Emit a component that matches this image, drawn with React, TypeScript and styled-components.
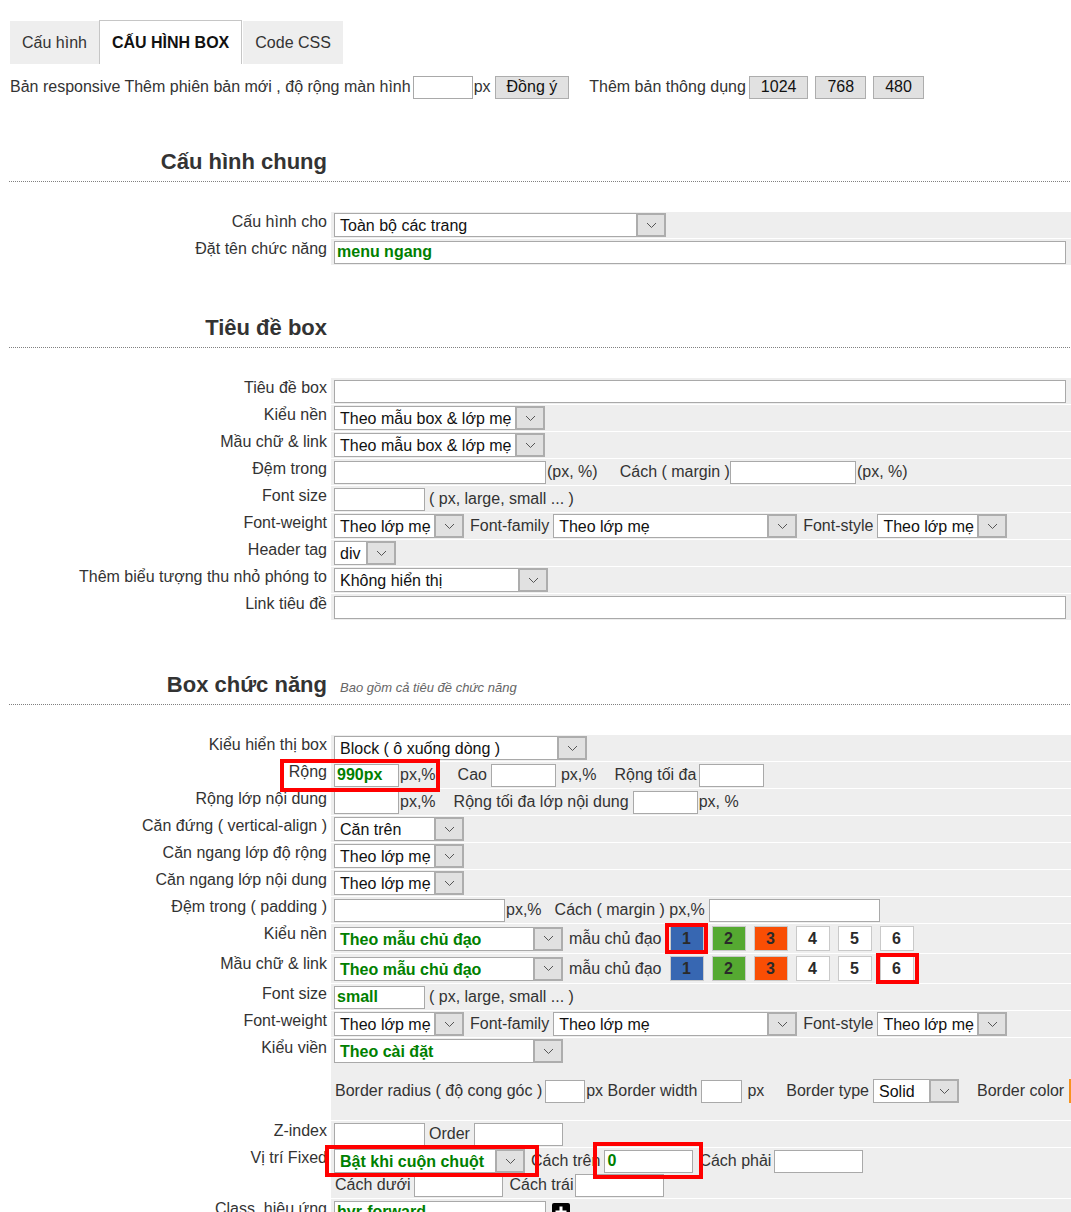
import React from 'react'
import styled, { createGlobalStyle, css } from 'styled-components'

const GREEN = '#008000'

const GlobalStyle = createGlobalStyle`
  html, body {
    margin: 0;
    padding: 0;
    background: #fff;
    overflow: hidden;
  }
  body {
    font-family: 'Liberation Sans', Arial, sans-serif;
    font-size: 16px;
    color: #333;
  }
  * {
    box-sizing: border-box;
  }
`

type SelProps = {
  w: number
  ml?: number
  green?: boolean
  children: React.ReactNode
}

const Sel: React.FC<SelProps> = ({ w, ml, green, children }) => (
  <SelectBox $w={w} $ml={ml}>
    <SelectValue $green={green}>{children}</SelectValue>
    <SelectArrow>
      <svg width="11" height="7" viewBox="0 0 11 7">
        <polyline points="1,1 5.5,5.5 10,1" fill="none" stroke="#555" strokeWidth="1" />
      </svg>
    </SelectArrow>
  </SelectBox>
)

type RowProps = {
  label?: string
  h?: number
  stack?: boolean
  children?: React.ReactNode
}

const Row: React.FC<RowProps> = ({ label, h, stack, children }) => (
  <>
    <Label>{label}</Label>
    <Field $h={h} $stack={stack}>
      {children}
    </Field>
  </>
)

const FontRow = () => (
  <Row label="Font-weight">
    <Sel w={130}>Theo lớp mẹ</Sel>
    <Txt $ml={6}>Font-family</Txt>
    <Sel w={244} ml={4}>
      Theo lớp mẹ
    </Sel>
    <Txt $ml={6}>Font-style</Txt>
    <Sel w={130} ml={4}>
      Theo lớp mẹ
    </Sel>
  </Row>
)

const swatches = [
  { n: 1, bg: '#3767b2' },
  { n: 2, bg: '#55a931' },
  { n: 3, bg: '#f94e04' },
  { n: 4, bg: '#fff' },
  { n: 5, bg: '#fff' },
  { n: 6, bg: '#fff' },
]

const Swatches = () => (
  <>
    {swatches.map((s) => (
      <Swatch key={s.n} $bg={s.bg}>
        {s.n}
      </Swatch>
    ))}
  </>
)

const App: React.FC = () => {
  return (
    <Page>
      <GlobalStyle />
      <Tabs>
        <Tab>Cấu hình</Tab>
        <Tab $active>CẤU HÌNH BOX</Tab>
        <Tab $gap>Code CSS</Tab>
      </Tabs>

      <TopBar>
        <Txt>Bản responsive Thêm phiên bản mới , độ rộng màn hình</Txt>
        <In $w={60} $ml={2} />
        <Txt $ml={1}>px</Txt>
        <Btn $ml={4}>Đồng ý</Btn>
        <Txt $ml={20}>Thêm bản thông dụng</Txt>
        <Btn $ml={3}>1024</Btn>
        <Btn $ml={7}>768</Btn>
        <Btn $ml={7}>480</Btn>
      </TopBar>

      <Section $mt={49}>
        <Head>
          <Title>Cấu hình chung</Title>
        </Head>
        <Form>
          <Row label="Cấu hình cho">
            <Sel w={332}>Toàn bộ các trang</Sel>
          </Row>
          <Row label="Đặt tên chức năng">
            <In $w={732} $green defaultValue="menu ngang" />
          </Row>
        </Form>
      </Section>

      <Section $mt={49}>
        <Head>
          <Title>Tiêu đề box</Title>
        </Head>
        <Form>
          <Row label="Tiêu đề box">
            <In $w={732} />
          </Row>
          <Row label="Kiểu nền">
            <Sel w={211}>Theo mẫu box &amp; lớp mẹ</Sel>
          </Row>
          <Row label="Mầu chữ & link">
            <Sel w={211}>Theo mẫu box &amp; lớp mẹ</Sel>
          </Row>
          <Row label="Đệm trong">
            <In $w={212} />
            <Txt $ml={1}>(px, %)</Txt>
            <Txt $ml={22}>Cách ( margin )</Txt>
            <In $w={126} />
            <Txt $ml={1}>(px, %)</Txt>
          </Row>
          <Row label="Font size">
            <In $w={91} />
            <Txt $ml={4}>( px, large, small ... )</Txt>
          </Row>
          <FontRow />
          <Row label="Header tag">
            <Sel w={62}>div</Sel>
          </Row>
          <Row label="Thêm biểu tượng thu nhỏ phóng to">
            <Sel w={214}>Không hiển thị</Sel>
          </Row>
          <Row label="Link tiêu đề">
            <In $w={732} />
          </Row>
        </Form>
      </Section>

      <Section $mt={51}>
        <Head>
          <Title>Box chức năng</Title>
          <Subtitle>Bao gồm cả tiêu đề chức năng</Subtitle>
        </Head>
        <Form>
          <Row label="Kiểu hiển thị box">
            <Sel w={253}>Block ( ô xuống dòng )</Sel>
          </Row>
          <Row label="Rộng">
            <In $w={65} $green defaultValue="990px" />
            <Txt $ml={1}>px,%</Txt>
            <Txt $ml={22}>Cao</Txt>
            <In $w={65} $ml={4} />
            <Txt $ml={5}>px,%</Txt>
            <Txt $ml={18}>Rộng tối đa</Txt>
            <In $w={65} $ml={3} />
          </Row>
          <Row label="Rộng lớp nội dung">
            <In $w={65} />
            <Txt $ml={1}>px,%</Txt>
            <Txt $ml={18}>Rộng tối đa lớp nội dung</Txt>
            <In $w={65} $ml={4} />
            <Txt $ml={1}>px, %</Txt>
          </Row>
          <Row label="Căn đứng ( vertical-align )">
            <Sel w={130}>Căn trên</Sel>
          </Row>
          <Row label="Căn ngang lớp độ rộng">
            <Sel w={130}>Theo lớp mẹ</Sel>
          </Row>
          <Row label="Căn ngang lớp nội dung">
            <Sel w={130}>Theo lớp mẹ</Sel>
          </Row>
          <Row label="Đệm trong ( padding )">
            <In $w={171} />
            <Txt $ml={1}>px,%</Txt>
            <Txt $ml={13}>Cách ( margin ) px,%</Txt>
            <In $w={171} $ml={4} />
          </Row>
          <Row label="Kiểu nền" h={29}>
            <Sel w={229} green>
              Theo mẫu chủ đạo
            </Sel>
            <Txt $ml={6}>mẫu chủ đạo</Txt>
            <Swatches />
          </Row>
          <Row label="Mầu chữ & link" h={29}>
            <Sel w={229} green>
              Theo mẫu chủ đạo
            </Sel>
            <Txt $ml={6}>mẫu chủ đạo</Txt>
            <Swatches />
          </Row>
          <Row label="Font size">
            <In $w={91} $green defaultValue="small" />
            <Txt $ml={4}>( px, large, small ... )</Txt>
          </Row>
          <FontRow />
          <Row label="Kiểu viền" stack>
            <Sel w={229} green>
              Theo cài đặt
            </Sel>
            <BorderLine>
              <Txt $ml={1}>Border radius ( độ cong góc )</Txt>
              <In $w={40} $ml={3} />
              <Txt $ml={1}>px Border width</Txt>
              <In $w={41} $ml={4} />
              <Txt $ml={5}>px</Txt>
              <Txt $ml={22}>Border type</Txt>
              <Sel w={86} ml={4}>
                Solid
              </Sel>
              <Txt $ml={18}>Border color</Txt>
              <ColorPick />
            </BorderLine>
          </Row>
          <Row label="Z-index">
            <In $w={91} />
            <Txt $ml={4}>Order</Txt>
            <In $w={89} $ml={4} />
          </Row>
          <Row label="Vị trí Fixed" stack>
            <Line>
              <Sel w={191} green>
                Bật khi cuộn chuột
              </Sel>
              <Txt $ml={6}>Cách trên</Txt>
              <In $w={89} $ml={4} $green defaultValue="0" />
              <Txt $ml={6}>Cách phải</Txt>
              <In $w={89} $ml={3} />
            </Line>
            <Line>
              <Txt $ml={1}>Cách dưới</Txt>
              <In $w={89} $ml={4} />
              <Txt $ml={6}>Cách trái</Txt>
              <In $w={89} $ml={2} />
            </Line>
          </Row>
          <Row label="Class, hiệu ứng">
            <In $w={212} $green defaultValue="hvr-forward" />
            <PlusBtn>
              <svg width="18" height="18" viewBox="0 0 18 18">
                <rect x="0" y="0" width="18" height="18" rx="2" fill="#000" />
                <path d="M9 3.5v11M3.5 9h11" stroke="#fff" strokeWidth="3" />
              </svg>
            </PlusBtn>
          </Row>
        </Form>
      </Section>

      <Mark $x={280} $y={759} $w={160} $h={33} />
      <Mark $x={665} $y={923} $w={43} $h={31} />
      <Mark $x={876} $y={953} $w={43} $h={31} />
      <Mark $x={325} $y={1145} $w={214} $h={32} />
      <Mark $x={593} $y={1142} $w={110} $h={37} />
    </Page>
  )
}

const Page = styled.div`
  position: relative;
  width: 1100px;
  padding: 20px 0 40px 9px;
`

const Tabs = styled.div`
  display: flex;
  align-items: flex-end;
  height: 44px;
  margin-left: 1px;
`

const Tab = styled.div<{ $active?: boolean; $gap?: boolean }>`
  display: flex;
  align-items: center;
  height: 43px;
  padding: 0 12px;
  background: #eee;
  color: #333;
  margin-left: ${(p) => (p.$gap ? 1 : 0)}px;

  ${(p) =>
    p.$active &&
    css`
      height: 44px;
      background: #fff;
      border: 1px solid #c6c6c6;
      border-bottom: 0;
      font-weight: bold;
      color: #111;
    `}
`

const TopBar = styled.div`
  display: flex;
  align-items: center;
  height: 24px;
  margin-top: 11px;
  padding-left: 1px;
`

const Txt = styled.span<{ $ml?: number }>`
  margin-left: ${(p) => p.$ml ?? 0}px;
  white-space: pre;
  line-height: 20px;
  flex-shrink: 0;
`

const Btn = styled.button<{ $ml?: number }>`
  height: 23px;
  margin-left: ${(p) => p.$ml ?? 0}px;
  padding: 0 11px;
  background: #e1e1e1;
  border: 1px solid #adadad;
  font: 16px 'Liberation Sans', Arial, sans-serif;
  color: #111;
  flex-shrink: 0;
`

const In = styled.input<{ $w: number; $ml?: number; $green?: boolean }>`
  width: ${(p) => p.$w}px;
  height: 23px;
  margin: 0 0 0 ${(p) => p.$ml ?? 0}px;
  padding: 0 2px;
  border: 1px solid #a9a9a9;
  background: #fff;
  font: 16px 'Liberation Sans', Arial, sans-serif;
  color: #111;
  outline: none;
  flex-shrink: 0;

  ${(p) =>
    p.$green &&
    css`
      color: ${GREEN};
      font-weight: bold;
    `}
`

const SelectBox = styled.div<{ $w: number; $ml?: number }>`
  display: flex;
  width: ${(p) => p.$w}px;
  height: 24px;
  margin-left: ${(p) => p.$ml ?? 0}px;
  border: 1px solid #a9a9a9;
  background: #fff;
  flex-shrink: 0;
`

const SelectValue = styled.div<{ $green?: boolean }>`
  flex: 1;
  min-width: 0;
  padding-left: 5px;
  line-height: 23px;
  white-space: nowrap;
  overflow: hidden;
  color: ${(p) => (p.$green ? GREEN : '#111')};
  font-weight: ${(p) => (p.$green ? 'bold' : 'normal')};
`

const SelectArrow = styled.div`
  display: flex;
  align-items: center;
  justify-content: center;
  width: 30px;
  margin: -1px -1px -1px 0;
  border: 2px solid #adadad;
  background: #e1e1e1;
`

const Section = styled.section<{ $mt: number }>`
  margin-top: ${(p) => p.$mt}px;
`

const Head = styled.div`
  display: flex;
  align-items: baseline;
  padding-bottom: 6px;
  margin-bottom: 30px;
  border-bottom: 1px dotted #808080;
`

const Title = styled.h2`
  width: 318px;
  margin: 0;
  padding-top: 1px;
  text-align: right;
  font-size: 22px;
  line-height: 26px;
  font-weight: bold;
  color: #333;
`

const Subtitle = styled.span`
  margin-left: 13px;
  font-size: 13px;
  font-style: italic;
  color: #666;
`

const Form = styled.div`
  display: grid;
  grid-template-columns: 322px 1fr;
  row-gap: 1px;
`

const Label = styled.div`
  padding: 1px 4px 0 0;
  text-align: right;
  line-height: 18px;
  color: #333;
  white-space: nowrap;
`

const Field = styled.div<{ $h?: number; $stack?: boolean }>`
  display: flex;
  flex-direction: ${(p) => (p.$stack ? 'column' : 'row')};
  align-items: ${(p) => (p.$stack ? 'flex-start' : 'center')};
  min-height: ${(p) => p.$h ?? 26}px;
  padding: 1px 3px;
  background: #eee;
`

const Line = styled.div`
  display: flex;
  align-items: center;
  height: 24px;
`

const BorderLine = styled.div`
  display: flex;
  align-items: center;
  height: 24px;
  margin: 16px 0 16px;
`

const Swatch = styled.div<{ $bg: string }>`
  display: flex;
  align-items: center;
  justify-content: center;
  width: 34px;
  height: 25px;
  margin-left: 8px;
  background: ${(p) => p.$bg};
  border: 1px solid #c9c9c9;
  font-weight: bold;
  font-size: 16px;
  color: #2a2a2a;
  flex-shrink: 0;
`

const ColorPick = styled.div`
  width: 40px;
  height: 24px;
  margin-left: 5px;
  border: 2px solid #f7931e;
  background: #fff;
  flex-shrink: 0;
`

const PlusBtn = styled.div`
  display: flex;
  align-self: flex-start;
  margin: 3px 0 0 6px;
`

const Mark = styled.div<{ $x: number; $y: number; $w: number; $h: number }>`
  position: absolute;
  left: ${(p) => p.$x}px;
  top: ${(p) => p.$y}px;
  width: ${(p) => p.$w}px;
  height: ${(p) => p.$h}px;
  border: 4px solid #f00;
  pointer-events: none;
`

export default App
